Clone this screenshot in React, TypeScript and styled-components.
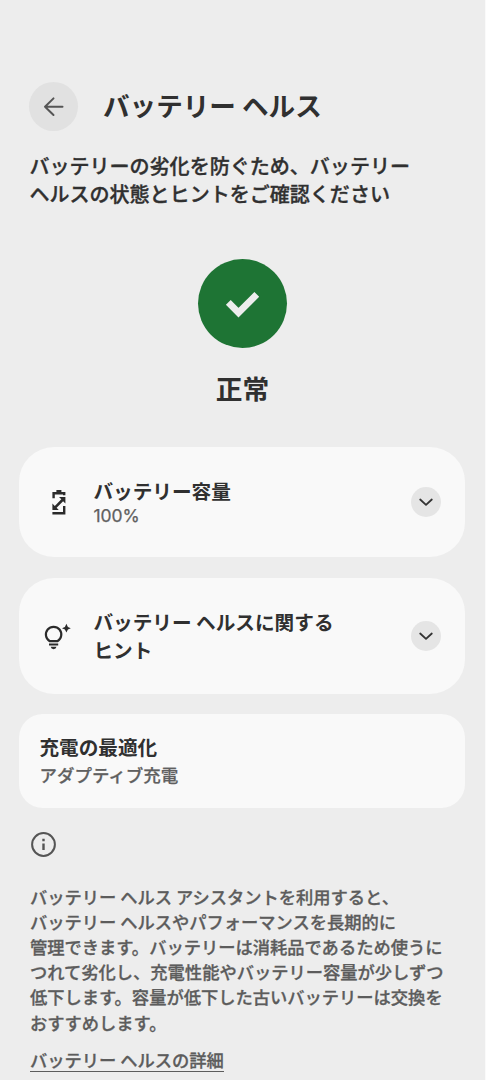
import React from "react";
import styled, { createGlobalStyle } from "styled-components";

const GlobalStyle = createGlobalStyle`
  *, *::before, *::after { box-sizing: border-box; }
  html, body { margin: 0; padding: 0; background: #ededed; }
  body { font-family: "Noto Sans CJK JP", sans-serif; color: #303030; }
  h1, h2, h3, p { margin: 0; }
`;

const Screen = styled.main`
  width: 486px;
  height: 1080px;
  overflow: hidden;
  display: flex;
  flex-direction: column;
  padding: 82px 19px 0;
  background: #ededed;
  border-right: 1px solid #fafafa;
`;

const Header = styled.header`
  display: flex;
  align-items: center;
  gap: 25px;
  height: 49px;
  padding-left: 10px;
`;

const BackButton = styled.button`
  display: flex;
  align-items: center;
  justify-content: center;
  width: 49px;
  height: 49px;
  padding: 0;
  border: 0;
  border-radius: 50%;
  background: #e1e1e1;
  color: #555;
`;

const Title = styled.h1`
  padding-bottom: 4px;
  font-size: 26.6px;
  line-height: 40px;
  font-weight: 700;
  white-space: nowrap;
`;

const Line = styled.span`
  display: block;
  white-space: nowrap;
`;

const Intro = styled.p`
  margin-top: 21px;
  padding-left: 10.4px;
  font-size: 20.05px;
  line-height: 28px;
  font-weight: 500;
  -webkit-text-stroke: 0.35px currentColor;
`;

const Status = styled.section`
  display: flex;
  flex-direction: column;
  align-items: center;
  margin-top: 51px;
`;

const StatusBadge = styled.div`
  display: flex;
  width: 89px;
  height: 89px;
  border-radius: 50%;
  background: #1e7434;
`;

const StatusLabel = styled.h2`
  margin-top: 20px;
  font-size: 26.7px;
  line-height: 40px;
  font-weight: 700;
`;

const Card = styled.section<{ $height: number; $radius: number; $gap: number }>`
  display: flex;
  align-items: center;
  flex-shrink: 0;
  width: 446px;
  height: ${(p) => p.$height}px;
  margin-top: ${(p) => p.$gap}px;
  margin-left: 0.4px;
  padding: 0 24.4px 0 20px;
  border-radius: ${(p) => p.$radius}px;
  background: #f9f9f9;
`;

const CardIcon = styled.span`
  display: flex;
  width: 54px;
  height: 40px;
  flex-shrink: 0;
`;

const CardText = styled.div`
  flex: 1;
`;

const CardTitle = styled.h3`
  font-size: 19.65px;
  line-height: 28px;
  font-weight: 700;
`;

const CardValue = styled.p<{ $latin?: boolean }>`
  font-family: ${(p) => (p.$latin ? '"Inter", sans-serif' : "inherit")};
  font-size: 17.5px;
  line-height: ${(p) => (p.$latin ? 22 : 27)}px;
  font-weight: ${(p) => (p.$latin ? 400 : 500)};
  color: #606060;
  -webkit-text-stroke: 0.25px currentColor;
`;

const ExpandButton = styled.button`
  display: flex;
  align-items: center;
  justify-content: center;
  width: 30px;
  height: 30px;
  padding: 0;
  border: 0;
  border-radius: 50%;
  background: #e5e5e5;
  color: #333;
`;

const Footer = styled.footer`
  display: flex;
  flex-direction: column;
  align-items: flex-start;
  margin-top: 23px;
  padding-left: 11px;
  color: #5c5c5c;
  font-size: 17.27px;
  line-height: 25.2px;
  font-weight: 500;
  -webkit-text-stroke: 0.3px currentColor;
`;

const FooterText = styled.p`
  margin-top: 26px;
`;

const DetailsLink = styled.a`
  margin-top: 13px;
  line-height: 23px;
  border-bottom: 1.5px solid #5c5c5c;
  white-space: nowrap;
`;

const Chevron = () => (
  <svg width="30" height="30" viewBox="0 0 30 30" fill="none" stroke="currentColor" strokeWidth="1.8" strokeLinecap="round" strokeLinejoin="round">
    <path d="M9.2 12.5 15 17.9 20.8 12.5" />
  </svg>
);

const ArrowBack = () => (
  <svg width="49" height="49" viewBox="0 0 49 49" fill="none" stroke="currentColor" strokeWidth="2" strokeLinecap="round" strokeLinejoin="round">
    <path d="M33.5 24.7H16M24.5 16.4 16 24.7 24.5 33" />
  </svg>
);

const Check = () => (
  <svg width="89" height="89" viewBox="0 0 89 89" fill="none" stroke="#ededed" strokeWidth="6.8">
    <path d="M30.3 43.4 40.5 53.6 58.8 35.4" />
  </svg>
);

const BatteryIcon = () => (
  <svg width="40" height="40" viewBox="0 0 40 40" fill="#2b2b2b">
    <path d="M13.4 16.2V10H17.4V8H22.4V10H26.4V13.2H24V12.4H15.8V16.2Z" />
    <path d="M26.4 24V32.4H13.4V30H24V24Z" />
    <path d="M20 15H26.4V21.6L24.1 19.3 17.6 25.8 19.8 28H13.4V21.5L15.8 23.9 22.3 17.3Z" />
  </svg>
);

const BulbIcon = () => (
  <svg width="40" height="40" viewBox="0 0 40 40">
    <path d="M10.8 25.2a7.7 7.7 0 1 1 7.6 0Z" fill="none" stroke="#2b2b2b" strokeWidth="2.2" strokeLinejoin="round" />
    <path d="M10 27.5h9.2v2H10zM11.7 30.8h5.8q-.4 2.4-2.9 2.4t-2.9-2.4" fill="#2b2b2b" />
    <path d="M27.4 7.8 28.9 10.9 31.8 12.2 28.9 13.6 27.4 16.6 25.9 13.6 23 12.2 25.9 10.9Z" fill="#2b2b2b" />
  </svg>
);

const InfoIcon = () => (
  <svg width="27" height="27" viewBox="-0.5 -0.5 27 27" fill="none" stroke="#555" strokeWidth="2">
    <circle cx="13" cy="13" r="11.4" />
    <path d="M13 12v6.6M13 7.2v2.5" strokeWidth="2.4" />
  </svg>
);

const footerLines = [
  "バッテリー ヘルス アシスタントを利用すると、",
  "バッテリー ヘルスやパフォーマンスを長期的に",
  "管理できます。バッテリーは消耗品であるため使うに",
  "つれて劣化し、充電性能やバッテリー容量が少しずつ",
  "低下します。容量が低下した古いバッテリーは交換を",
  "おすすめします。",
];

export default function App() {
  return (
    <>
      <GlobalStyle />
      <Screen lang="ja">
        <Header>
          <BackButton aria-label="戻る"><ArrowBack /></BackButton>
          <Title>バッテリー ヘルス</Title>
        </Header>
        <Intro>
          <Line>バッテリーの劣化を防ぐため、バッテリー</Line>
          <Line>ヘルスの状態とヒントをご確認ください</Line>
        </Intro>
        <Status>
          <StatusBadge><Check /></StatusBadge>
          <StatusLabel>正常</StatusLabel>
        </Status>
        <Card $height={110} $radius={35} $gap={39}>
          <CardIcon><BatteryIcon /></CardIcon>
          <CardText>
            <CardTitle>バッテリー容量</CardTitle>
            <CardValue $latin>100%</CardValue>
          </CardText>
          <ExpandButton aria-label="開く"><Chevron /></ExpandButton>
        </Card>
        <Card $height={116} $radius={35} $gap={20.5}>
          <CardIcon><BulbIcon /></CardIcon>
          <CardText>
            <CardTitle>
              <Line>バッテリー ヘルスに関する</Line>
              <Line>ヒント</Line>
            </CardTitle>
          </CardText>
          <ExpandButton aria-label="開く"><Chevron /></ExpandButton>
        </Card>
        <Card $height={94} $radius={24} $gap={20}>
          <CardText>
            <CardTitle>充電の最適化</CardTitle>
            <CardValue>アダプティブ充電</CardValue>
          </CardText>
        </Card>
        <Footer>
          <InfoIcon />
          <FooterText>
            {footerLines.map((line) => <Line key={line}>{line}</Line>)}
          </FooterText>
          <DetailsLink>バッテリー ヘルスの詳細</DetailsLink>
        </Footer>
      </Screen>
    </>
  );
}
